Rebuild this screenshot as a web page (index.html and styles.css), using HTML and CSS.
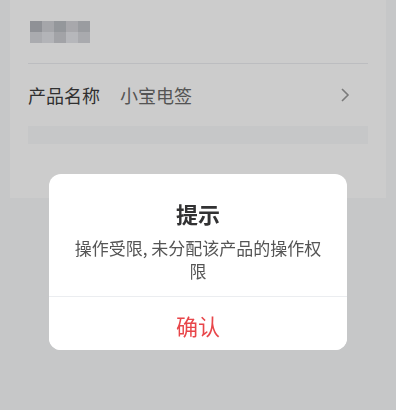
FILE: index.html
```html
<!DOCTYPE html>
<html>
  <head>
    <title>产品详情</title>

    <link rel="stylesheet" href="styles.css">
  </head>
  <body>
    <div class="page">
      <div class="head">
        <div class="mosaic">
          <span class="t1"></span><span class="t2"></span><span class="t3"></span><span class="t4"></span><span class="t5"></span>
          <span class="b1"></span><span class="b2"></span><span class="b3"></span><span class="b4"></span><span class="b5"></span>
        </div>
      </div>
      <div class="cell">
        <span class="cell-label">产品名称</span>
        <span class="cell-value">小宝电签</span>
        <svg class="arrow" width="10" height="16" viewBox="0 0 10 16">
          <path d="M2 2 L8 8 L2 14" fill="none" stroke="#999" stroke-width="1.6" />
        </svg>
      </div>
      <div class="gap-bar"></div>
    </div>

    <div class="mask"></div>

    <div class="dialog">
      <div class="dialog-content">
        <div class="dialog-title">提示</div>
        <div class="dialog-message">操作受限, 未分配该产品的操作权限</div>
      </div>
      <div class="dialog-footer">
        <button class="dialog-confirm">确认</button>
      </div>
    </div>
  </body>
</html>
```

FILE: styles.css
```css
body,
div,
span,
button {
  margin: 0;
  padding: 0;
  border: 0;
  box-sizing: border-box;
  font-family: "Noto Sans CJK SC", "Noto Sans", sans-serif;
}

/* Page */
body {
  background: #f8f9fb;
  width: 396px;
  height: 410px;
  overflow: hidden;
}

.page {
  background: #fff;
  margin: 0 10px;
  padding: 0 18px;
  height: 198px;
}

.head {
  height: 64px;
  padding-top: 21px;
  border-bottom: 1px solid #ebedf0;
}

.mosaic {
  display: grid;
  grid-template-columns: repeat(5, 12px);
  grid-template-rows: 11px 11px;
  margin-left: 2px;
}

.t1 { background: #b3b6bc; }
.t2 { background: #cfd0d5; }
.t3 { background: #babdc2; }
.t4 { background: #d2d3d8; }
.t5 { background: #c1c3c8; }
.b1 { background: #d5d6db; }
.b2 { background: #e0e1e6; }
.b3 { background: #cbccd1; }
.b4 { background: #e4e5ea; }
.b5 { background: #d4d5da; }

/* Cell row */
.cell {
  display: flex;
  align-items: center;
  height: 62px;
  font-size: 18px;
}

.cell-label {
  color: #3c3c3c;
  width: 92px;
}

.cell-value {
  color: #6a6a6a;
  flex: 1;
}

.arrow {
  margin-right: 18px;
}

.gap-bar {
  height: 18px;
  background: #f8f9fb;
}

/* Mask */
.mask {
  position: fixed;
  top: 0;
  left: 0;
  right: 0;
  bottom: 0;
  background: rgba(0, 0, 0, 0.2);
}

/* Dialog */
.dialog {
  position: fixed;
  top: 174px;
  left: 49px;
  width: 298px;
  background: #fff;
  border-radius: 12px;
  overflow: hidden;
}

.dialog-content {
  padding: 24px 24px 14px;
  text-align: center;
}

.dialog-title {
  font-size: 22px;
  line-height: 30px;
  font-weight: bold;
  color: #323233;
}

.dialog-message {
  margin-top: 8px;
  font-size: 17px;
  line-height: 23px;
  color: #555;
}

.dialog-footer {
  border-top: 1px solid #ebedf0;
}

.dialog-confirm {
  display: block;
  width: 100%;
  height: 53px;
  padding-top: 3px;
  background: #fff;
  color: #e8464a;
  font-size: 22px;
  cursor: pointer;
}
```
